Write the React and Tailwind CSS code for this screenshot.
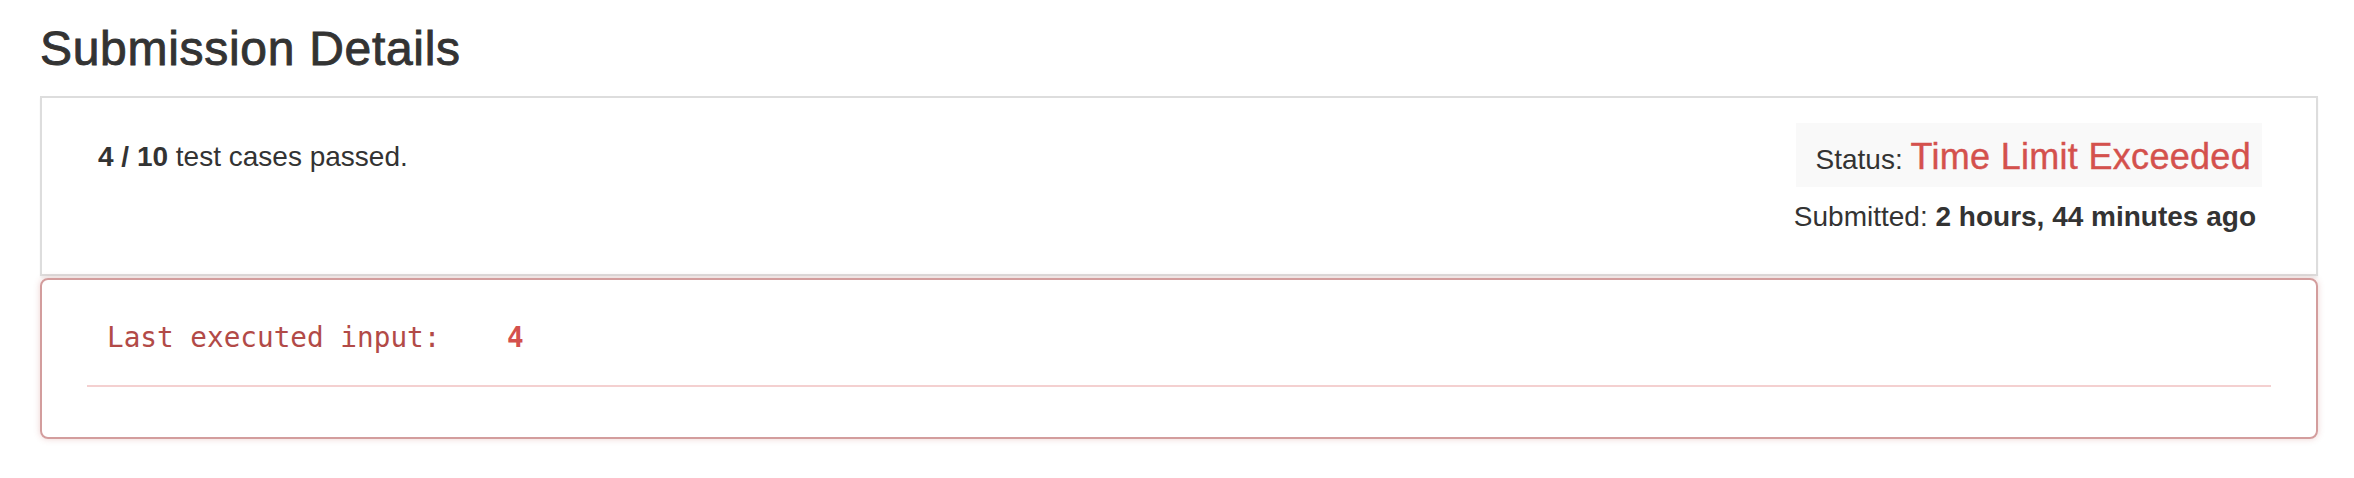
import React from "react";

export default function App() {
    return (
        <div className="min-h-screen bg-white pl-[40px] pr-[36px] pt-[23px] text-[#333] font-['Liberation_Sans',Arial,sans-serif]">
            <h3 className="mb-[20px] text-[48px] leading-[1.1] font-medium tracking-[0.7px] [-webkit-text-stroke:0.9px_#333]">Submission Details</h3>

            {/* summary panel */}
            <div className="flex items-start justify-between border-2 border-[#ddd] pl-[56px] pr-[54px] pt-[25px] pb-[37px] shadow-[0_2px_2px_rgba(0,0,0,0.05)]">
                <div className="mt-[14px] text-[28px] leading-[40px]">
                    <b>4 / 10</b> test cases passed.
                </div>
                <div className="flex flex-col items-end">
                    <div className="bg-[#f9f9f9] pl-[20px] pr-[11px] pt-[14px] pb-[7px] text-[28px] leading-[40px]">
                        Status: <span className="text-[36px] tracking-[0.3px] text-[#d4514d] [-webkit-text-stroke:0.4px_#d4514d]">Time Limit Exceeded</span>
                    </div>
                    <div className="mt-[10px] mr-[6px] text-[28px] leading-[40px]">
                        Submitted: <b>2 hours, 44 minutes ago</b>
                    </div>
                </div>
            </div>

            {/* error panel */}
            <div className="mt-[2px] rounded-[8px] border-2 border-[#d39d9d] px-[45px] pt-[38px] pb-[50px] shadow-[0_0_6px_rgba(185,74,72,0.25)]">
                <pre className="pl-[20px] text-[27.7px] leading-[40px] text-[#b24a47] font-['DejaVu_Sans_Mono',monospace]">
                    Last executed input:    <b className="text-[#d4514d]">4</b>
                </pre>
                <div className="mt-[27px] h-[2px] bg-[#f4d0d0]" />
            </div>
        </div>
    );
}
